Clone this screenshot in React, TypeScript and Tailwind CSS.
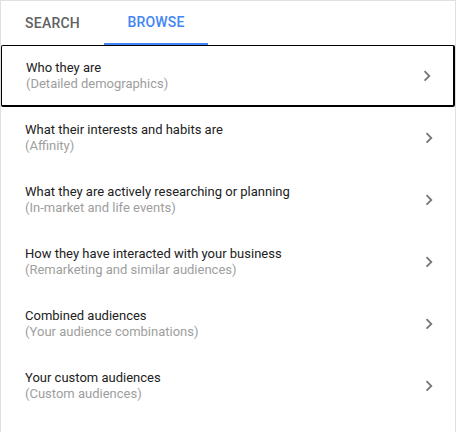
import React from "react";

const rows = [
  ["Who they are", "(Detailed demographics)"],
  ["What their interests and habits are", "(Affinity)"],
  ["What they are actively researching or planning", "(In-market and life events)"],
  ["How they have interacted with your business", "(Remarketing and similar audiences)"],
  ["Combined audiences", "(Your audience combinations)"],
  ["Your custom audiences", "(Custom audiences)"],
];

function Chevron() {
  return (
    <svg width="24" height="24" viewBox="0 0 24 24" className="text-[#757575] self-center -ml-px">
      <path d="M8.59 16.59L13.17 12 8.59 7.41 10 6l6 6-6 6z" fill="currentColor" transform="scale(0.9) translate(1.3,1.3)" />
    </svg>
  );
}

export default function App() {
  return (
    <div className="w-[456px] h-[432px] border-l border-t border-r border-[#e0e0e0] bg-white" style={{ fontFamily: "Roboto, 'Liberation Sans', sans-serif" }}>
      <div className="flex h-[44px]">
        <div className="w-[103px] h-full flex items-center justify-center text-[14px] font-medium text-[#616161] tracking-[0.2px]">SEARCH</div>
        <div className="w-[104px] h-full flex flex-col">
          <div className="flex-1 flex items-center justify-center text-[14px] font-medium text-[#4285f4] tracking-[0.2px]">BROWSE</div>
          <div className="h-[2px] bg-[#4285f4]" />
        </div>
      </div>
      <div className="flex flex-col">
        {rows.map(([t, s], i) => (
          <div
            key={i}
            className={
              "flex h-[62px] pl-[24px] pr-[14px] " +
              (i === 0 ? "border border-black border-b-2 border-r-2 rounded-[2px]" : "")
            }
          >
            <div className={"flex-1 self-start flex flex-col text-[13px] leading-[16px] " + (i === 0 ? "pt-[14px]" : "pt-[15px]")}>
              <span className="text-[#212121]">{t}</span>
              <span className="text-[#9e9e9e]">{s}</span>
            </div>
            <Chevron />
          </div>
        ))}
      </div>
    </div>
  );
}
